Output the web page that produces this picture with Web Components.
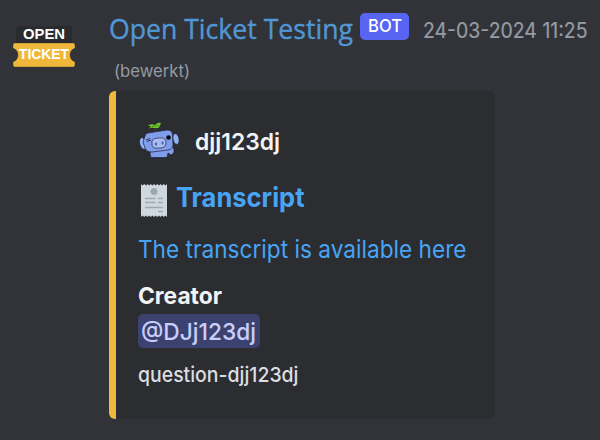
<!DOCTYPE html>
<html lang="nl"><head><meta charset="utf-8"><title>Open Ticket</title>
<style>html,body{margin:0;background:#313338}body{width:600px;height:440px;overflow:hidden;font-family:Inter,"Noto Sans",sans-serif}</style></head>
<body><chat-message></chat-message>
<script>
// One line of text condensed or widened to the given advance width.
customElements.define('fit-text',class extends HTMLElement{
 connectedCallback(){
  const w=+this.getAttribute('w'),s=this.getAttribute('size');
  this.attachShadow({mode:'open'}).innerHTML=`<style>:host{display:block;flex:none;width:${w}px;height:var(--lh,30px);line-height:var(--lh,30px);font-size:${s}px;white-space:nowrap}span{display:inline-block;transform-origin:0 50%}</style><span><slot></slot></span>`;
  const el=this.shadowRoot.querySelector('span');
  el.style.transform=`scaleX(${w/el.getBoundingClientRect().width})`;
 }
});
customElements.define('ticket-avatar',class extends HTMLElement{
 connectedCallback(){this.attachShadow({mode:'open'}).innerHTML=`<style>:host{display:block;width:68px;height:50px}svg{display:block}text{font-family:"Liberation Sans",sans-serif;font-weight:700;fill:#fff}</style>
 <svg width="68" height="50" viewBox="0 0 68 50"><rect x="6" y="5" width="56" height="17" rx="2" fill="#292b2f"/>
 <path d="M5 22H63Q65 22 65 24V27Q60 29 60 34Q60 39 65 41V43.500Q65 46 63 46H5Q3 46 3 43.500V41Q8 39 8 34Q8 29 3 27V24Q3 22 5 22Z" fill="#f0b83b" stroke="#29292b" stroke-opacity=".45" stroke-width=".7"/>
 <text x="13" y="18" font-size="14.500" textLength="42" lengthAdjust="spacingAndGlyphs">OPEN</text><text x="9" y="38" font-size="14.500" textLength="50" lengthAdjust="spacingAndGlyphs">TICKET</text></svg>`}
});
customElements.define('wumpus-icon',class extends HTMLElement{
 connectedCallback(){this.attachShadow({mode:'open'}).innerHTML=`<style>:host{display:block;flex:none;width:42px;height:38px}svg{display:block}</style>
 <svg width="42" height="38" viewBox="0 0 42 38"><g stroke="#202337" stroke-width=".7">
 <ellipse cx="5" cy="22.500" rx="3.300" ry="6" transform="rotate(-15 5 22.500)" fill="#93b1f2"/><ellipse cx="38" cy="18" rx="3" ry="5.500" transform="rotate(-12 38 18)" fill="#93b1f2"/>
 <path d="M13 28Q11 32 13 36.500H29L30 32L33 34Q38 32 35 26L31 22Z" fill="#7f9dea"/>
 <path d="M7 15Q7 12.500 10 12L29 9Q34 9 34.500 13L35 24Q35 28 30 29L14 31Q8 31 7 27L5 21Z" fill="#7f9dea"/>
 <path d="M14 20Q15 17 21 17Q28 16 28 21.500Q28 27 22 27Q14 28 14 24Z" fill="#a9bdf4"/></g>
 <ellipse cx="18" cy="23" rx="1.200" ry="1.800" fill="#5365ac"/><ellipse cx="24.500" cy="22" rx="1.200" ry="1.800" fill="#5365ac"/>
 <path d="M8 19L12 17.500M9 20.500L13 19" stroke="#29355e" fill="none"/><circle cx="30.500" cy="16.500" r="2.300" fill="#08090d"/>
 <path d="M17 10L18 7" stroke="#31551d"/><path d="M10 5Q12 2 17 4Q20 1 23 2L21 6.500Q17 7.500 14 6.500L11 7.500L13 5Z" fill="#70cc2b"/><path d="M14 5.500L21 4.500" stroke="#2c6520" stroke-width=".6"/></svg>`}
});
customElements.define('receipt-icon',class extends HTMLElement{
 connectedCallback(){this.attachShadow({mode:'open'}).innerHTML=`<style>:host{display:block;flex:none;width:26px;height:33px}svg{display:block}</style>
 <svg width="26" height="33" viewBox="0 0 26 33"><path d="M0 0L1.500 1.500L3.250 0L5 1.500L6.500 0L8.100 1.500L9.750 0L11.400 1.500L13 0L14.600 1.500L16.250 0L17.900 1.500L19.500 0L21.100 1.500L22.750 0L24.400 1.500L26 0V33L24.400 31.500L22.750 33L21.100 31.500L19.500 33L17.900 31.500L16.250 33L14.600 31.500L13 33L11.400 31.500L9.750 33L8.100 31.500L6.500 33L5 31.500L3.250 33L1.500 31.500L0 33Z" fill="#d0d8de"/><circle cx="13" cy="7.500" r="3.500" fill="#9aaab3"/><path d="M4 14.500H14.500M17 14.500H22M4 18.500H14.500M17 18.500H22M4 23.500H22M17 27.500H22" stroke="#9aaab3" stroke-width="1.500"/></svg>`}
});
customElements.define('bot-badge',class extends HTMLElement{
 connectedCallback(){this.attachShadow({mode:'open'}).innerHTML=`<style>:host{display:block;box-sizing:border-box;width:49px;height:27px;padding-left:7.500px;border-radius:5px;background:#5865f2;color:#fff;font-weight:500;--lh:26px}</style><fit-text w="34" size="17.5"><slot></slot></fit-text>`}
});
customElements.define('ticket-embed',class extends HTMLElement{
 connectedCallback(){this.attachShadow({mode:'open'}).innerHTML=`<style>
 :host{display:block;box-sizing:border-box;width:386px;height:328px;border-left:7px solid #efb93d;border-radius:6px;background:#2b2d31;padding:30px 0 0 22px;color:#f2f3f5}
 .row{display:flex}.author{height:38px;gap:15px;align-items:center;font-weight:600;--lh:34px}.author fit-text{padding-top:3px}.title{height:34px;margin-top:22px;gap:9px;padding-left:3px;color:#48a4f4;font-weight:700;--lh:34px}receipt-icon{margin-top:3px}
 .desc{margin-top:17px;color:#48a4f4;--lh:34px}.creator{margin-top:14px;font-weight:700;--lh:32px}
 .mention{width:122px;box-sizing:border-box;height:34px;margin-top:2px;padding-left:3px;border-radius:5px;background:#3c4270;color:#c9cdfb;font-weight:500;--lh:35px}
 .name{margin-top:12px;color:#dbdee1;font-weight:500;--lh:30px}</style>
 <div class="row author"><wumpus-icon></wumpus-icon><fit-text w="85" size="23">djj123dj</fit-text></div>
 <div class="row title"><receipt-icon></receipt-icon><fit-text w="128.500" size="27">Transcript</fit-text></div>
 <fit-text class="desc" w="328.500" size="24.500">The transcript is available here</fit-text>
 <fit-text class="creator" w="84" size="23.500">Creator</fit-text>
 <div class="mention"><fit-text w="115" size="23.500">@DJj123dj</fit-text></div>
 <fit-text class="name" w="160.500" size="20.500">question-djj123dj</fit-text>`}
});
customElements.define('chat-message',class extends HTMLElement{
 connectedCallback(){this.attachShadow({mode:'open'}).innerHTML=`<style>
 :host{display:grid;grid-template-columns:99px 1fr;width:600px;height:440px;box-sizing:border-box;padding:0 0 0 10px}ticket-avatar{margin-top:21px}
 header{display:flex;height:59px;padding-top:11px;box-sizing:border-box}.user{color:#5197d5;font-family:"Open Sans";-webkit-text-stroke:.35px #5197d5;--lh:34px}bot-badge{margin:2px 0 0 7px}.time{color:#949ba4;margin-left:13.500px;-webkit-text-stroke:.2px #949ba4;--lh:39px}.edited{color:#949ba4;margin-left:5px;--lh:24px}ticket-embed{margin-top:8px}</style>
 <ticket-avatar></ticket-avatar><main><header><fit-text class="user" w="244" size="28">Open Ticket Testing</fit-text><bot-badge>BOT</bot-badge><fit-text class="time" w="164.500" size="21">24-03-2024 11:25</fit-text></header><fit-text class="edited" w="76" size="17">(bewerkt)</fit-text><ticket-embed></ticket-embed></main>`}
});
</script></body></html>
